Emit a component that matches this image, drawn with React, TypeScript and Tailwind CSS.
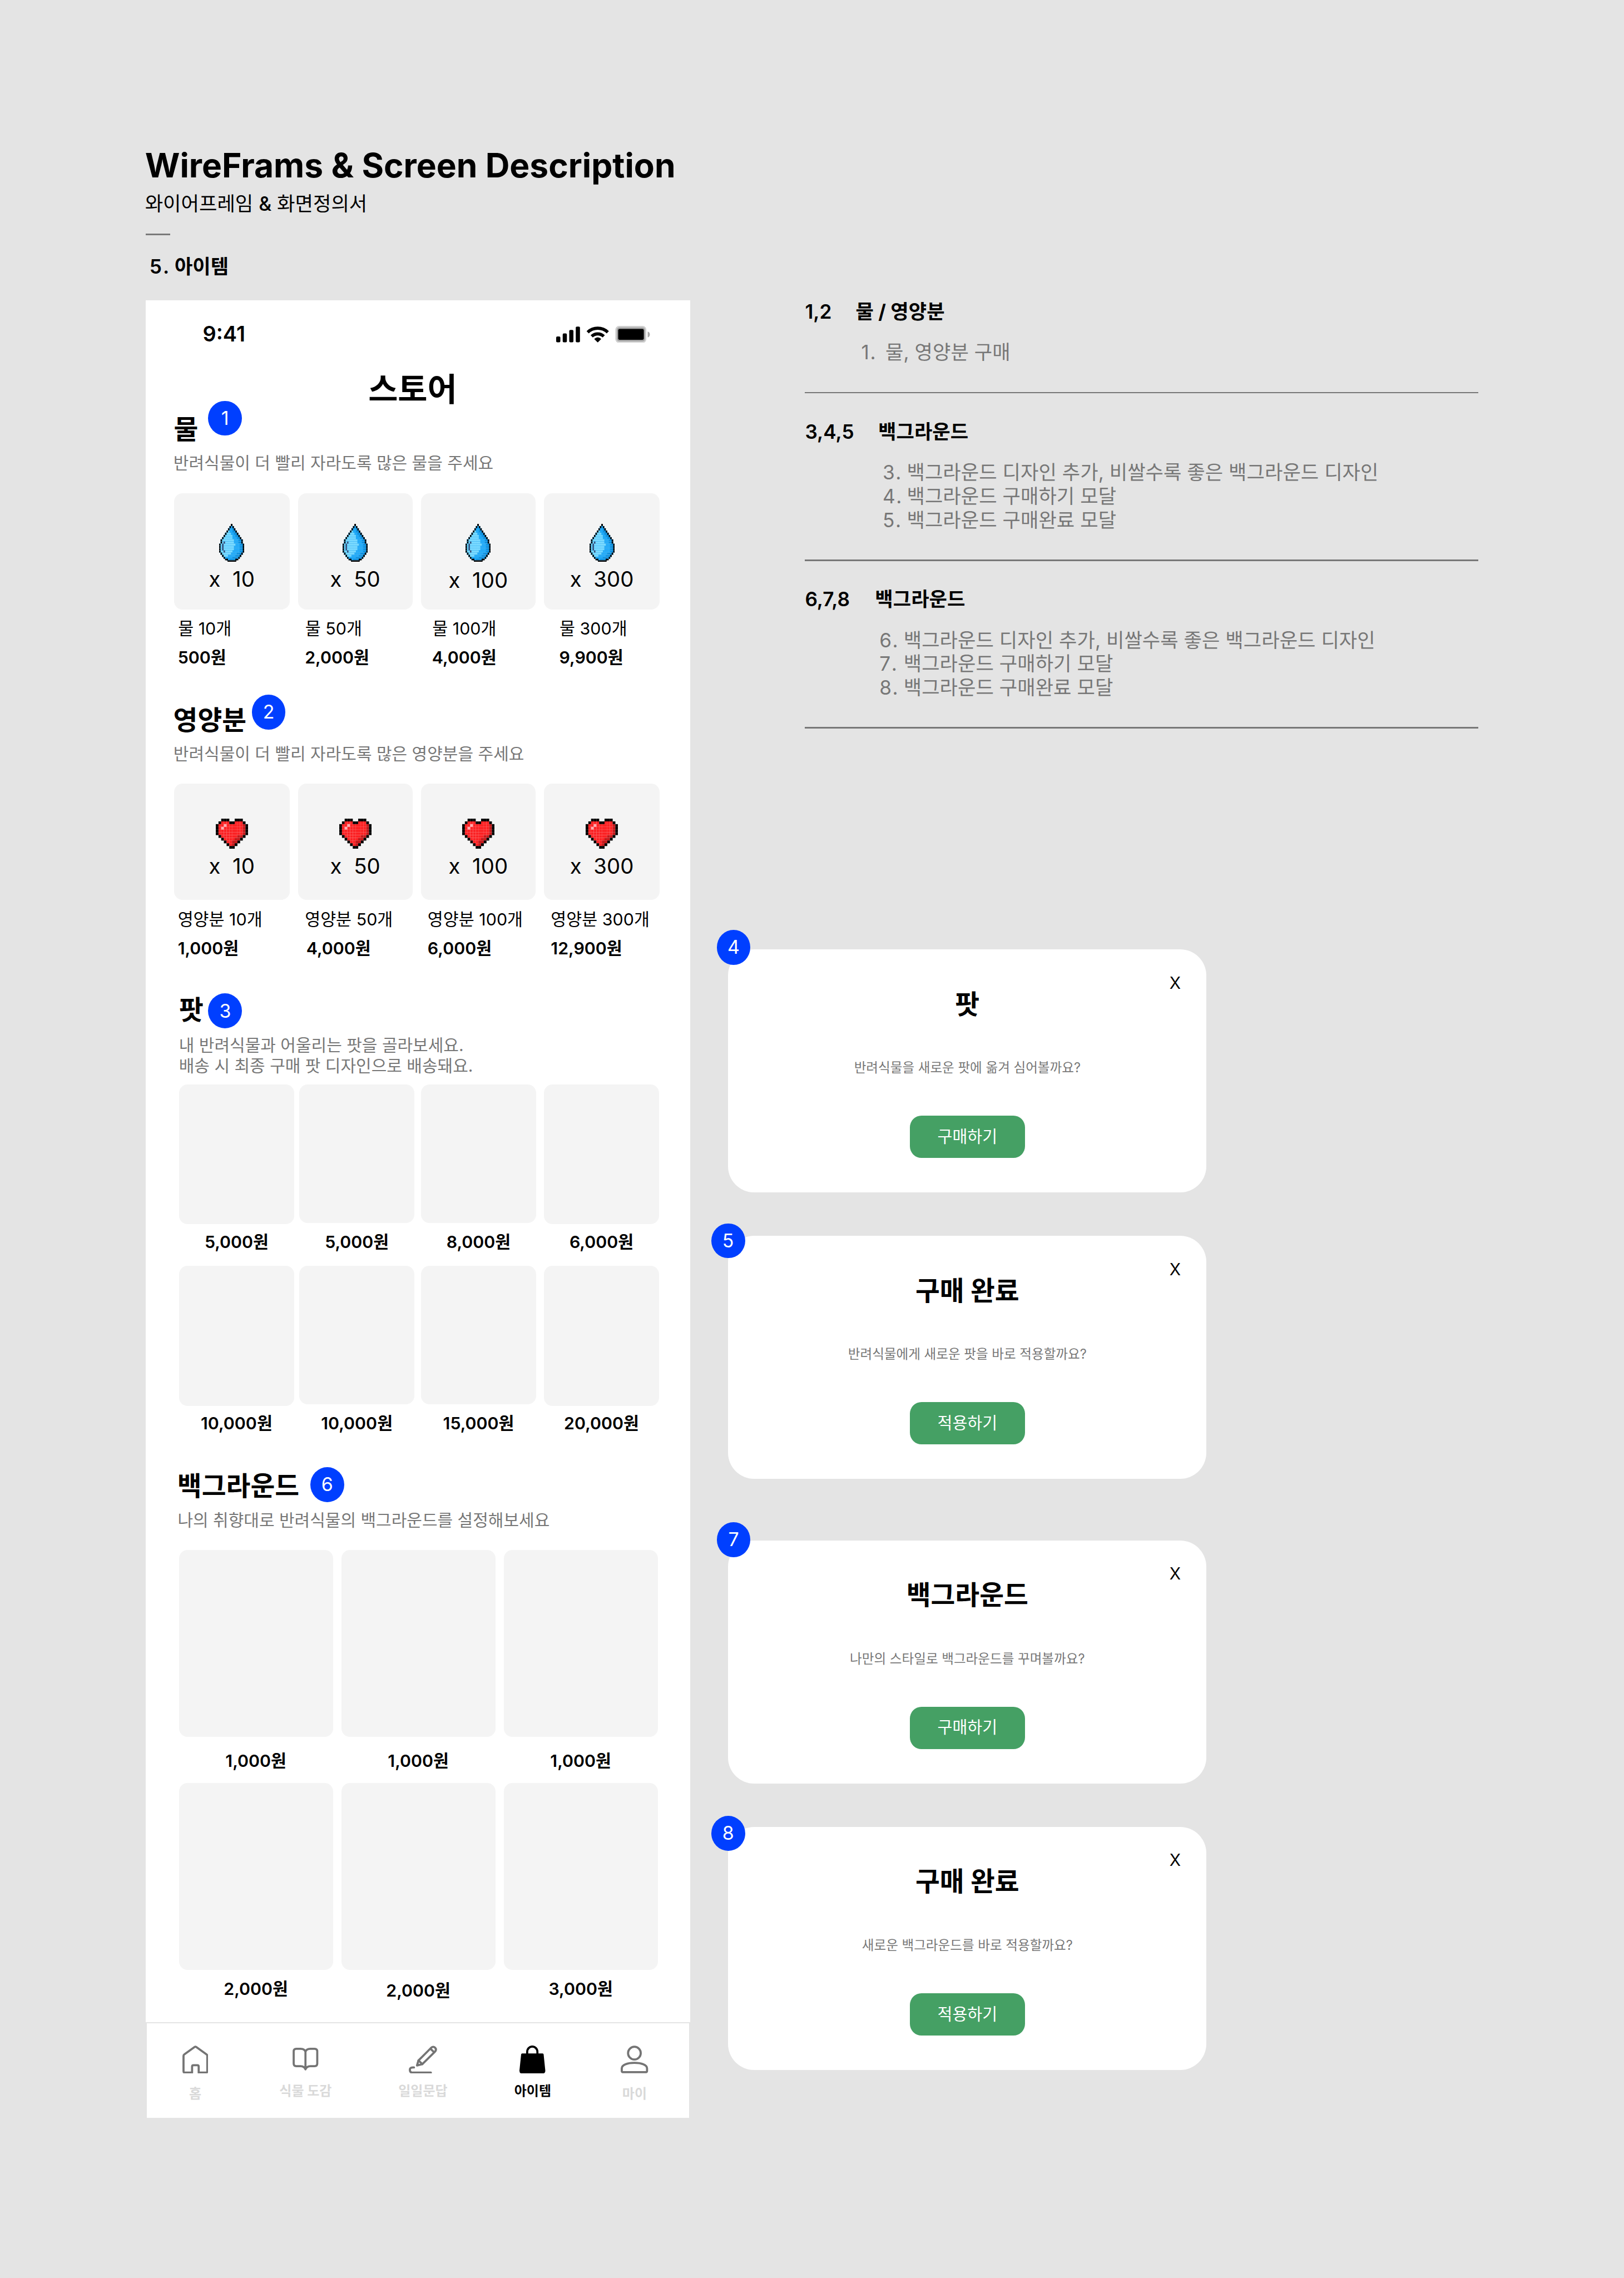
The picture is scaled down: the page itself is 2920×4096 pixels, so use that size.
import type { ReactNode } from 'react';
import clsx from 'clsx';

/* ---------- shared pieces ---------- */

function Badge({ n, className }: { n: number; className: string }) {
  return (
    <span
      className={clsx(
        'absolute z-10 flex h-[24.1px] w-[23.3px] items-center justify-center rounded-[50%] bg-[#003fff] text-[13px] leading-[14px] font-normal text-white',
        className,
      )}
    >
      {n}
    </span>
  );
}

/* Horizontal bands of the drop: left column, right column, end of light tone, end of mid tone. */
const DROP_Y = [0, 13, 26, 39.5, 52.5, 66, 79, 92, 105, 118, 131.5, 144.5, 158, 171, 184, 197, 208, 217, 226];
const DROP_ROWS: [number, number, number, number][] = [
  [8, 8, 0, 0],
  [7, 9, 0, 9],
  [6, 10, 0, 9],
  [5, 11, 7, 9],
  [4, 12, 8, 10],
  [3, 13, 9, 11],
  [2, 14, 9, 12],
  [1, 15, 10, 13],
  [1, 15, 10, 13],
  [0, 16, 11, 14],
  [0, 16, 10, 14],
  [0, 16, 10, 14],
  [0, 16, 9, 14],
  [1, 15, 8, 12],
  [2, 14, 6, 11],
  [3, 13, 4, 9],
  [5, 11, 5, 7],
];

function Drop() {
  const u = 150 / 17;
  const cell = (c: number, r: number, w: number, fill: string, key: string) => (
    <rect key={key} x={c * u} y={DROP_Y[r]} width={w * u} height={DROP_Y[r + 1] - DROP_Y[r]} fill={fill} />
  );
  return (
    <svg viewBox="0 0 150 226" preserveAspectRatio="none" shapeRendering="geometricPrecision" className="h-[26.1px] w-[17.3px]">
      {DROP_ROWS.map(([l, r, light, mid], i) => (
        <g key={i}>
          {r > l && cell(l, i, r - l + 1, '#0c8fde', 'd')}
          {mid > l && cell(l, i, mid - l, '#20aaf8', 'm')}
          {light > l && cell(l, i, light - l, '#74d8ff', 'l')}
          {cell(l, i, 1, '#000', 'bl')}
          {cell(r, i, 1, '#000', 'br')}
        </g>
      ))}
      {cell(4, 16, 2, '#000', 'c1')}
      {cell(11, 16, 2, '#000', 'c2')}
      <rect x="50" y="217" width="52" height="9" fill="#000" />
      {cell(3, 8, 1, '#33507c', 'h1')}
      <rect x={2 * u} y="118" width={u} height="40" fill="#33507c" />
      {cell(3, 12, 1, '#33507c', 'h3')}
      <g stroke="#fff" strokeOpacity=".22" strokeWidth="1.2">
        {[4, 5, 6, 7, 8, 9, 10, 11, 12, 13].map((c) => (
          <path key={c} d={`M${c * u} 92V197`} />
        ))}
        {[92, 118, 144.5, 171, 184].map((y) => (
          <path key={y} d={`M18 ${y}H132`} />
        ))}
      </g>
    </svg>
  );
}

const HEART = [
  '..KKK..KKK..',
  '.KRRRKKRRRK.',
  'KRRPRRRRRRDK',
  'KRPRRRRRRRDK',
  'KRRRRRRRRRDK',
  'KRRRRRRRRRDK',
  '.KRRRRRRDDK.',
  '..KRRRRDDK..',
  '...KRRDDK...',
  '....KRDK....',
  '.....KK.....',
];
const HEART_FILL: Record<string, string> = { K: '#000', R: '#fb2224', D: '#c4181a', P: '#ffabb0' };

function Heart() {
  return (
    <svg viewBox="0 0 12 11" preserveAspectRatio="none" className="h-[20.7px] w-[22.3px]">
      {HEART.flatMap((row, y) =>
        row.split('').map((c, x) => (c === '.' ? null : <rect key={`${x}-${y}`} x={x} y={y} width="1.02" height="1.02" fill={HEART_FILL[c]} />)),
      )}
      <g stroke="#fff" strokeOpacity=".18" strokeWidth=".08">
        <path d="M1 2H11M1 3H11M1 5H11M2 6H10M3 7H9M5 2V9M6 2V9M8 1V7M9 1V7M3 2V7M4 1V8" />
      </g>
    </svg>
  );
}

/* ---------- store sections ---------- */

function SectionTitle({ children, badge, badgeClass, className }: { children: ReactNode; badge: number; badgeClass: string; className: string }) {
  return (
    <h2 className={clsx('relative text-[18.25px] leading-[22px] font-bold', className)}>
      {children}
      <Badge n={badge} className={badgeClass} />
    </h2>
  );
}

const CARD_W = ['w-[79.7px]', 'w-[78.9px]', 'w-[79.1px]', 'w-[79.7px]'];

function PackCards({ icon, counts, className, nudge }: { icon: ReactNode; counts: number[]; className: string; nudge?: number }) {
  return (
    <div className="ml-[19.1px] flex gap-[5.7px]">
      {counts.map((n, i) => (
        <div key={n} className={clsx('flex h-[79.9px] flex-col items-center rounded-[5.8px] bg-[#f4f4f4]', CARD_W[i], className)}>
          {icon}
          <span className={clsx('text-[14.7px] leading-[18px] whitespace-pre', nudge === n ? 'mt-[3.9px]' : 'mt-[3px]')}>{`x  ${n}`}</span>
        </div>
      ))}
    </div>
  );
}

function Price({ children, className }: { children: ReactNode; className?: string }) {
  return <p className={clsx('text-[11.62px] leading-[14px] font-semibold', className)}>{children}</p>;
}

function PotRow({ prices, className }: { prices: string[]; className: string }) {
  return (
    <div className={clsx('ml-[22.7px] grid grid-cols-[82.8px_83.8px_84.6px_79.2px]', className)}>
      {prices.map((p, i) => (
        <div key={i} className="flex w-[79.2px] flex-col">
          <div className="h-[96.4px]">
            <div className={clsx('rounded-[5.8px] bg-[#f4f4f4]', i === 1 || i === 2 ? 'h-[95.2px]' : 'h-[96.3px]')} />
          </div>
          <Price className="mt-[5px] text-center">{p}</Price>
        </div>
      ))}
    </div>
  );
}

function BackdropRow({ prices, className, gap, nudge }: { prices: string[]; className: string; gap: string; nudge?: boolean }) {
  return (
    <div className={clsx('ml-[22.6px] flex gap-[5.8px]', className)}>
      {prices.map((p, i) => (
        <div key={i} className="w-[106px]">
          <div className="h-[128.7px] rounded-[5.8px] bg-[#f4f4f4]" />
          <Price className={clsx('text-center', nudge && i === 1 ? 'mt-[6.900px]' : gap)}>{p}</Price>
        </div>
      ))}
    </div>
  );
}

/* ---------- status bar and tab bar ---------- */

function StatusIcons() {
  return (
    <svg viewBox="77 54 559 101" className="mt-[3.6px] h-[11.66px] w-[64.5px]">
      <rect x="77" y="117" width="25" height="35" rx="7" />
      <rect x="116" y="99" width="25" height="53" rx="7" />
      <rect x="155" y="78" width="25" height="74" rx="7" />
      <rect x="194" y="58" width="25" height="94" rx="7" />
      <g fill="none" stroke="#000" strokeWidth="19">
        <path d="M265 92a87 87 0 0 1 120 0" />
        <path d="M289 116a52 52 0 0 1 72 0" />
      </g>
      <path d="M304 132q21-20 42 0l-19 19q-2 2-4 0z" />
      <rect x="430" y="54" width="185" height="101" rx="22" fill="#cfcfcf" />
      <rect x="439" y="63" width="168" height="83" rx="15" fill="#a3a3a3" />
      <rect x="447" y="72" width="153" height="65" rx="9" />
      <path d="M623 87q13 5 13 18t-13 18z" fill="#a8a8a8" />
    </svg>
  );
}

const HomeIcon = (
  <svg viewBox="0 0 155 168" fill="none" stroke="#747474" strokeWidth="12.5" strokeLinejoin="round" strokeLinecap="round" className="h-[19.4px] w-[17.9px]">
    <path d="M6.5 62q0-6 4.5-9L72 9q5.500-4 11 0L144 53q4.500 3 4.500 9V153q0 8.500-8.500 8.500H97V126q0-8.500-8.500-8.500H66q-8.500 0-8.500 8.500V161.500H15q-8.500 0-8.500-8.500z" />
  </svg>
);
const BookIcon = (
  <svg viewBox="0 0 154 139" fill="none" stroke="#747474" strokeWidth="12.5" strokeLinejoin="round" className="h-[16px] w-[17.8px]">
    <path d="M77 24C73 11 61 6.500 48 6.500H22Q6.500 6.500 6.500 22V95Q6.500 110 22 110H48C61 110 71 114 77 129C83 114 93 110 106 110H132Q147.500 110 147.500 95V22Q147.500 6.500 132 6.500H106C93 6.500 81 11 77 24zV129" />
  </svg>
);
const PencilIcon = (
  <svg viewBox="0 0 170 168" fill="none" stroke="#747474" strokeWidth="12.5" strokeLinejoin="round" strokeLinecap="round" className="h-[19.4px] w-[19.6px]">
    <path d="M58 89L133 14Q146 2 157 13Q168 24 156 37L81 111L49 119z" />
    <path d="M58 89L81 111M131 20L150 39" />
    <path d="M31 131Q6.500 129 6.500 145Q6.500 161.500 23 161.500H132" />
  </svg>
);
const BagIcon = (
  <svg viewBox="0 0 155 168" className="h-[19.4px] w-[17.9px]">
    <path d="M16 47H138q5 0 6 5l10 96q1 19-16 19H16q-17 0-16-19L10 52q1-5 6-5z" />
    <path d="M46 50V38a30.500 32 0 0 1 61 0V50" fill="none" stroke="#000" strokeWidth="12.5" />
  </svg>
);
const UserIcon = (
  <svg viewBox="0 0 164 165" fill="none" stroke="#747474" strokeWidth="12.5" strokeLinejoin="round" className="h-[19.1px] w-[18.9px]">
    <circle cx="82" cy="45" r="38" />
    <path d="M6.500 151V136C6.500 115 40 103 82 103S157.500 115 157.500 136V151q0 7.500-6 7.500H12.500q-6 0-6-7.500z" />
  </svg>
);

function Tab({ icon, label, width, low, active }: { icon: ReactNode; label: string; width: string; low?: boolean; active?: boolean }) {
  return (
    <div className={clsx('flex flex-col items-center', width)}>
      <div className="flex h-[19.5px] items-center">{icon}</div>
      <span className={clsx('text-[9.2px] leading-[12px] font-bold whitespace-nowrap', low ? 'mt-[8px]' : 'mt-[6.1px]', active ? 'text-black' : 'text-[#d9d9d9]')}>{label}</span>
    </div>
  );
}

function Phone() {
  return (
    <section className="mt-[14.5px] flex h-[1252.2px] w-[375px] shrink-0 flex-col bg-white">
      <div className="flex grow flex-col pl-[0.4px]">
        <div className="flex justify-between pt-[14.1px] pr-[27.7px] pl-[39px]">
          <span className="text-[14.5px] leading-[18px] font-semibold">9:41</span>
          <StatusIcons />
        </div>
        <h1 className="mt-[15.4px] pr-[7.6px] text-center text-[22.15px] leading-[28px] font-bold">스토어</h1>

        <SectionTitle badge={1} badgeClass="top-[-8.6px] left-[23.600px]" className="mt-[2.3px] ml-[19.1px]">물</SectionTitle>
        <p className="mt-[5.3px] ml-[18.8px] text-[11.5px] leading-[14px] text-[#777]">반려식물이 더 빨리 자라도록 많은 물을 주세요</p>
        <div className="h-[13.8px]" />
        <PackCards icon={<Drop />} counts={[10, 50, 100, 300]} className="pt-[21.1px]" nudge={100} />
        <div className="mt-[6.400px] ml-[22px] grid grid-cols-[87.5px_87.5px_87.6px_auto] text-[11.65px] leading-[14px]">
          <span>물 10개</span>
          <span>물 50개</span>
          <span>물 100개</span>
          <span>물 300개</span>
        </div>
        <div className="mt-[6px] ml-[21.8px] grid grid-cols-[87.5px_87.5px_87.6px_auto]">
          <Price>500원</Price>
          <Price>2,000원</Price>
          <Price>4,000원</Price>
          <Price>9,900원</Price>
        </div>

        <SectionTitle badge={2} badgeClass="top-[-6.4px] left-[54px]" className="mt-[24.700px] ml-[18.7px]">영양분</SectionTitle>
        <p className="mt-[5.3px] ml-[18.8px] text-[11.5px] leading-[14px] text-[#777]">반려식물이 더 빨리 자라도록 많은 영양분을 주세요</p>
        <div className="h-[13.8px]" />
        <PackCards icon={<Heart />} counts={[10, 50, 100, 300]} className="pt-[23.9px]" />
        <div className="mt-[6.400px] ml-[21.8px] grid grid-cols-[87.5px_84.5px_84.8px_auto] text-[11.65px] leading-[14px]">
          <span>영양분 10개</span>
          <span>영양분 50개</span>
          <span>영양분 100개</span>
          <span>영양분 300개</span>
        </div>
        <div className="mt-[6px] ml-[21.8px] grid grid-cols-[87.5px_84.5px_84.8px_auto]">
          <Price>1,000원</Price>
          <Price className="pl-[1px]">4,000원</Price>
          <Price>6,000원</Price>
          <Price>12,900원</Price>
        </div>

        <SectionTitle badge={3} badgeClass="top-[-0.3px] left-[20.1px]" className="mt-[24.4px] ml-[22.7px]">팟</SectionTitle>
        <p className="mt-[6.200px] ml-[22.6px] text-[11.5px] leading-[14.1px] text-[#777]">
          내 반려식물과 어울리는 팟을 골라보세요.
          <br />
          배송 시 최종 구매 팟 디자인으로 배송돼요.
        </p>
        <PotRow prices={['5,000원', '5,000원', '8,000원', '6,000원']} className="mt-[5.9px]" />
        <PotRow prices={['10,000원', '10,000원', '15,000원', '20,000원']} className="mt-[9.6px]" />

        <SectionTitle badge={6} badgeClass="top-[-2px] left-[91.5px]" className="mt-[25.1px] ml-[21.5px]">백그라운드</SectionTitle>
        <p className="mt-[5.5px] ml-[21.7px] text-[11.5px] leading-[14px] text-[#777]">나의 취향대로 반려식물의 백그라운드를 설정해보세요</p>
        <BackdropRow prices={['1,000원', '1,000원', '1,000원']} className="mt-[13.5px]" gap="mt-[9.5px]" />
        <BackdropRow prices={['2,000원', '2,000원', '3,000원']} className="mt-[8.4px]" gap="mt-[6px]" nudge />
      </div>

      <nav className="flex h-[66.6px] shrink-0 border border-[#e4e4e4] pt-[15px] pl-[0.4px]">
        <Tab icon={HomeIcon} label="홈" width="w-[66.1px]" low />
        <Tab icon={BookIcon} label="식물 도감" width="w-[85.8px]" />
        <Tab icon={PencilIcon} label="일일문답" width="w-[75.8px]" />
        <Tab icon={BagIcon} label="아이템" width="w-[75.4px]" active />
        <Tab icon={UserIcon} label="마이" width="w-[64.8px]" low />
      </nav>
    </section>
  );
}

/* ---------- notes and dialogs ---------- */

type NoteProps = {
  nums: string;
  title: string;
  items: [string, string][];
  numsClass: string;
  listClass: string;
  className?: string;
};

function Note({ nums, title, items, numsClass, listClass, className }: NoteProps) {
  return (
    <div className={clsx('text-[13.5px] leading-[16.4px]', className)}>
      <h3 className="flex font-bold">
        <span className={clsx('shrink-0 font-semibold', numsClass)}>{nums}</span>
        {title}
      </h3>
      <ol className={clsx('mt-[11.6px] text-[#777]', listClass)}>
        {items.map(([n, text]) => (
          <li key={n} className="flex whitespace-nowrap">
            <span className="w-[16.7px] shrink-0">
              {n}
              <span className="ml-[0.6px]">.</span>
            </span>
            {text}
          </li>
        ))}
      </ol>
      <div className="mt-[18.5px] h-px bg-[#777]" />
    </div>
  );
}

type DialogProps = { n: number; badgeClass: string; title: string; text: string; action: string; className?: string };

function DialogCard({ n, badgeClass, title, text, action, className }: DialogProps) {
  return (
    <div className={clsx('relative flex h-[167.3px] w-[329.2px] flex-col items-center rounded-[18px] bg-white pt-[26.5px] pl-[0.5px]', className)}>
      <Badge n={n} className={badgeClass} />
      <button className="absolute top-[15.8px] right-[17.4px] text-[11.4px] leading-[14px]">X</button>
      <h2 className="text-[18.25px] leading-[22px] font-bold">{title}</h2>
      <p className="mt-[26.8px] text-[9.03px] leading-[12px] text-[#777]">{text}</p>
      <button className="mt-[27.1px] h-[29px] w-[79.1px] rounded-[8px] bg-[#45a064] text-[11.2px] leading-[14px] text-white">{action}</button>
    </div>
  );
}

const BACKDROP_NOTE = '백그라운드 디자인 추가, 비쌀수록 좋은 백그라운드 디자인';

export default function App() {
  return (
    <div lang="ko" className="h-[4096px] w-[2920px] overflow-hidden bg-[#e4e4e4]">
      <div className="h-[1568px] w-[1118px] pt-[99.9px] pl-[100.2px] font-['Inter','Noto_Sans_CJK_KR',sans-serif] text-black [zoom:2.6118]">
        <header>
          <h1 className="-ml-[0.4px] text-[23.15px] leading-[28px] font-bold">WireFrams &amp; Screen Description</h1>
          <p className="mt-[4.7px] -ml-[0.4px] text-[13.5px] leading-[16.4px]">
            와이어프레임 <span className="font-medium">&amp;</span> 화면정의서
          </p>
          <div className="mt-[11.800px] h-px w-[17.1px] bg-[#7a7a7a]" />
          <p className="mt-[14px] ml-[2.7px] flex text-[13.5px] leading-[16.4px] font-bold">
            <span className="w-[17.3px] font-semibold">
              5<span className="ml-[0.8px]">.</span>
            </span>
            아이템
          </p>
        </header>

        <main className="flex">
          <Phone />
          <div className="ml-[25.9px] w-[518px] pt-[14.7px]">
            <div className="ml-[53.1px] w-[463.6px]">
              <Note nums="1,2" title="물 / 영양분" numsClass="w-[34.9px]" listClass="ml-[38.7px]" items={[['1', '물, 영양분 구매']]} />
              <Note
                nums="3,4,5"
                title="백그라운드"
                numsClass="w-[50.4px]"
                listClass="ml-[53.4px]"
                className="mt-[18.7px]"
                items={[
                  ['3', BACKDROP_NOTE],
                  ['4', '백그라운드 구매하기 모달'],
                  ['5', '백그라운드 구매완료 모달'],
                ]}
              />
              <Note
                nums="6,7,8"
                title="백그라운드"
                numsClass="w-[48.200px]"
                listClass="ml-[51.2px]"
                className="mt-[18.7px]"
                items={[
                  ['6', BACKDROP_NOTE],
                  ['7', '백그라운드 구매하기 모달'],
                  ['8', '백그라운드 구매완료 모달'],
                ]}
              />
            </div>
            <div className="mt-[152.2px]">
              <DialogCard n={4} badgeClass="top-[-13.5px] left-[-7.7px]" title="팟" text="반려식물을 새로운 팟에 옮겨 심어볼까요?" action="구매하기" />
              <DialogCard n={5} badgeClass="top-[-8.8px] left-[-11.5px]" title="구매 완료" text="반려식물에게 새로운 팟을 바로 적용할까요?" action="적용하기" className="mt-[29.9px]" />
              <DialogCard n={7} badgeClass="top-[-12.6px] left-[-7.7px]" title="백그라운드" text="나만의 스타일로 백그라운드를 꾸며볼까요?" action="구매하기" className="mt-[42.4px]" />
              <DialogCard n={8} badgeClass="top-[-7.8px] left-[-11.5px]" title="구매 완료" text="새로운 백그라운드를 바로 적용할까요?" action="적용하기" className="mt-[29.9px]" />
            </div>
          </div>
        </main>
      </div>
    </div>
  );
}
